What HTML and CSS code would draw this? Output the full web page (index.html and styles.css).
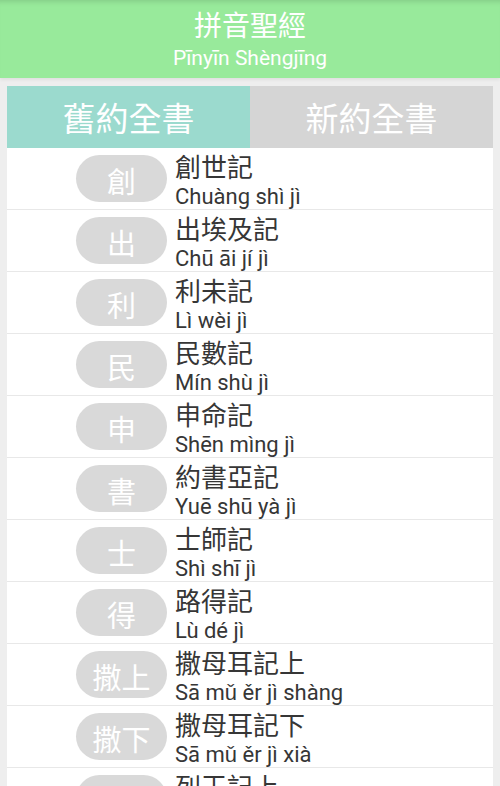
FILE: index.html
```html
<!DOCTYPE html>
<html lang="zh-Hant">
<head>
<meta charset="utf-8">
<title>拼音聖經</title>
<link rel="stylesheet" href="styles.css">
</head>
<body>
<header class="appbar">
  <div class="appbar-title">拼音聖經</div>
  <div class="appbar-sub">Pīnyīn Shèngjīng</div>
</header>
<main class="panel">
  <div class="tabs">
    <div class="tab tab-active">舊約全書</div>
    <div class="tab">新約全書</div>
  </div>
  <ul class="books">
    <li class="book"><span class="pill">創</span><div class="names"><div class="zh">創世記</div><div class="py">Chuàng shì jì</div></div></li>
    <li class="book"><span class="pill">出</span><div class="names"><div class="zh">出埃及記</div><div class="py">Chū āi jí jì</div></div></li>
    <li class="book"><span class="pill">利</span><div class="names"><div class="zh">利未記</div><div class="py">Lì wèi jì</div></div></li>
    <li class="book"><span class="pill">民</span><div class="names"><div class="zh">民數記</div><div class="py">Mín shù jì</div></div></li>
    <li class="book"><span class="pill">申</span><div class="names"><div class="zh">申命記</div><div class="py">Shēn mìng jì</div></div></li>
    <li class="book"><span class="pill">書</span><div class="names"><div class="zh">約書亞記</div><div class="py">Yuē shū yà jì</div></div></li>
    <li class="book"><span class="pill">士</span><div class="names"><div class="zh">士師記</div><div class="py">Shì shī jì</div></div></li>
    <li class="book"><span class="pill">得</span><div class="names"><div class="zh">路得記</div><div class="py">Lù dé jì</div></div></li>
    <li class="book"><span class="pill">撒上</span><div class="names"><div class="zh">撒母耳記上</div><div class="py">Sā mǔ ěr jì shàng</div></div></li>
    <li class="book"><span class="pill">撒下</span><div class="names"><div class="zh">撒母耳記下</div><div class="py">Sā mǔ ěr jì xià</div></div></li>
    <li class="book"><span class="pill">王上</span><div class="names"><div class="zh">列王記上</div><div class="py">Liè wáng jì shàng</div></div></li>
  </ul>
</main>
</body>
</html>
```

FILE: styles.css
```css
html, body {
  margin: 0;
  padding: 0;
}
body {
  width: 500px;
  height: 786px;
  overflow: hidden;
  background: #eeeeee;
  font-family: Roboto, "Noto Sans CJK TC", sans-serif;
  color: #363636;
}
.appbar {
  position: relative;
  height: 78px;
  box-sizing: border-box;
  padding-top: 6px;
  background: #98ea9b;
  color: #ffffff;
  text-align: center;
  box-shadow: inset 0 6px 5px -4px rgba(0, 0, 0, 0.12), 0 2px 3px rgba(0, 0, 0, 0.06);
}
.appbar-title {
  font-family: "Noto Sans CJK TC", sans-serif;
  font-size: 28px;
  line-height: 36px;
}
.appbar-sub {
  margin-top: 3px;
  font-family: Roboto, sans-serif;
  font-size: 21px;
  line-height: 26px;
}
.panel {
  margin: 8px 7px 0;
  background: #ffffff;
}
.tabs {
  display: grid;
  grid-template-columns: 243px 243px;
  height: 62px;
}
.tab {
  background: #d5d5d5;
  color: #ffffff;
  font-family: "Noto Sans CJK TC", sans-serif;
  font-size: 33px;
  line-height: 62px;
  text-align: center;
}
.tab-active {
  background: #9bdace;
}
.books {
  list-style: none;
  margin: 0;
  padding: 0;
}
.book {
  display: flex;
  align-items: center;
  height: 61px;
  border-bottom: 1px solid #e8e8e8;
}
.pill {
  flex: none;
  width: 91px;
  height: 47px;
  margin-left: 69px;
  border-radius: 24px;
  background: #d9d9d9;
  color: #ffffff;
  font-family: "Noto Sans CJK TC", sans-serif;
  font-size: 29px;
  line-height: 50px;
  text-align: center;
}
.names {
  align-self: flex-start;
  margin-top: -1px;
  margin-left: 8px;
}
.zh {
  font-family: "Noto Sans CJK TC", sans-serif;
  font-size: 26px;
  line-height: 38px;
}
.py {
  font-family: Roboto, sans-serif;
  font-size: 22px;
  line-height: 24px;
}
```
